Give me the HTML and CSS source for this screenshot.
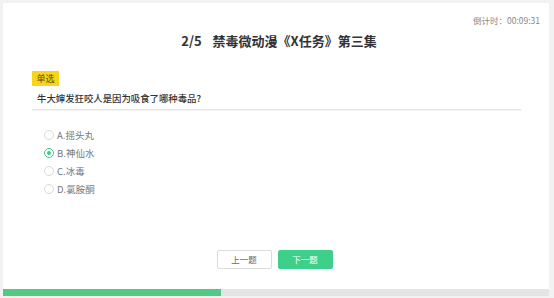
FILE: index.html
```html
<!DOCTYPE html>
<html lang="zh-CN">
<head>
<meta charset="utf-8">
<title>答题</title>
<link rel="stylesheet" href="styles.css">
</head>
<body>
<div class="page">
  <div class="card">
    <div class="timer">倒计时：00:09:31</div>
    <div class="title"><span class="num">2/5</span><span class="name">禁毒微动漫《X任务》第三集</span></div>
    <div class="question">
      <span class="tag">单选</span>
      <div class="qtext">牛大婶发狂咬人是因为吸食了哪种毒品?</div>
    </div>
    <ul class="options">
      <li class="opt"><span class="radio"></span>A.摇头丸</li>
      <li class="opt checked"><span class="radio"></span>B.神仙水</li>
      <li class="opt"><span class="radio"></span>C.冰毒</li>
      <li class="opt"><span class="radio"></span>D.氯胺酮</li>
    </ul>
    <div class="actions">
      <button class="btn btn-prev">上一题</button>
      <button class="btn btn-next">下一题</button>
    </div>
    <div class="progress"><div class="progress-fill" style="width:40%"></div></div>
  </div>
</div>
</body>
</html>
```

FILE: styles.css
```css
* { box-sizing: border-box; }
html, body {
  margin: 0;
  padding: 0;
  background: #f2f2f2;
  font-family: "Noto Sans CJK SC", "Noto Sans", sans-serif;
}
.page {
  padding: 3px 5px 2px 3px;
  height: 298px;
}
.card {
  background: #fff;
  height: 293px;
  display: flex;
  flex-direction: column;
}
.timer {
  text-align: right;
  padding: 11px 9px 0 0;
  font-size: 8.5px;
  line-height: 12px;
  color: #888;
}
.title {
  margin-top: 6px;
  text-align: center;
  font-size: 13px;
  line-height: 18px;
  font-weight: 700;
  color: #333;
  padding-left: 6px;
}
.title .num { margin-right: 11px; }
.question {
  margin: 21px 28px 0 29px;
  padding-bottom: 4px;
  border-bottom: 1px solid #e6e6e6;
  box-shadow: 0 1px 0 #f3f3f3;
}
.tag {
  display: block;
  width: fit-content;
  height: 15px;
  line-height: 15px;
  padding: 0 4.5px;
  background: #f8d41a;
  color: #5a4a10;
  font-size: 9px;
}
.qtext {
  margin-top: 4.5px;
  padding-left: 5px;
  font-size: 9.4px;
  line-height: 14px;
  font-weight: 500;
  color: #333;
}
.options {
  list-style: none;
  margin: 16px 0 0 0;
  padding: 0 0 0 41px;
}
.opt {
  display: flex;
  align-items: center;
  gap: 3px;
  height: 18.2px;
  font-size: 9.5px;
  color: #777;
}
.radio {
  width: 10px;
  height: 10px;
  border: 1px solid #d9d9d9;
  border-radius: 50%;
  display: flex;
  align-items: center;
  justify-content: center;
}
.opt.checked .radio { border-color: #3ecb88; }
.opt.checked .radio::after {
  content: "";
  width: 4px;
  height: 4px;
  border-radius: 50%;
  background: #3ecb88;
}
.actions {
  margin-top: auto;
  margin-bottom: 20px;
  display: flex;
  justify-content: center;
  gap: 6px;
  padding-right: 3px;
}
.btn {
  width: 55px;
  height: 19px;
  border-radius: 2px;
  font-family: inherit;
  font-size: 8.5px;
  line-height: 17px;
  padding: 0;
  cursor: pointer;
}
.btn-prev {
  background: #fff;
  border: 1px solid #dcdcdc;
  color: #666;
}
.btn-next {
  background: #3ed08a;
  border: 1px solid #3ed08a;
  color: #fff;
}
.progress {
  height: 7px;
  background: #e4e4e4;
}
.progress-fill {
  height: 100%;
  background: #52c985;
}
```
